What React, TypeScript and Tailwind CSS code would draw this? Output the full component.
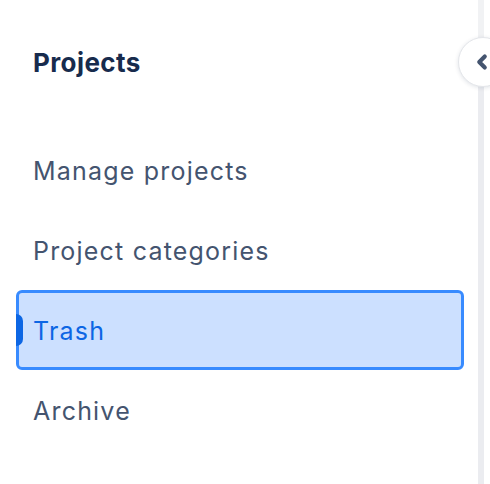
import { ChevronLeft } from 'lucide-react';

const items = [
    { label: 'Manage projects', selected: false },
    { label: 'Project categories', selected: false },
    { label: 'Trash', selected: true },
    { label: 'Archive', selected: false },
];

export default function App() {
    return (
        <div className="relative flex h-[484px] w-[490px] overflow-hidden bg-white font-['Inter',sans-serif]">
            <nav className="w-[478px] shrink-0 pl-4 pr-[14px]">
                <div className="flex h-[130px] items-start pl-[17px] pt-[45px]">
                    <h2 className="text-[26px] font-bold leading-[36px] tracking-[0.4px] text-[#172B4D]">Projects</h2>
                </div>

                <ul>
                    {items.map((item) => (
                        <li key={item.label}>
                            <a
                                href="#"
                                className={
                                    item.selected
                                        ? 'relative flex h-20 items-center rounded-[6px] border-[3px] border-[#388BFF] bg-[#CCE0FF] pl-[14px] pt-[3px] text-[25px] tracking-[1.2px] text-[#0C66E4]'
                                        : 'relative flex h-20 items-center rounded-[6px] border-[3px] border-transparent pl-[14px] pt-[3px] text-[25px] tracking-[1.2px] text-[#44546F]'
                                }
                            >
                                {/* the selected row gets a pill on its left edge */}
                                {item.selected && (
                                    <span className="absolute -left-[3px] top-[21px] h-8 w-[7px] rounded-r-full bg-[#0C66E4]" />
                                )}
                                {item.label}
                            </a>
                        </li>
                    ))}
                </ul>
            </nav>

            <div className="flex w-[6px] shrink-0 flex-col">
                <div className="h-[40px] bg-[#F1F2F4]" />
                <div className="flex-1 bg-[#EBECF0]" />
            </div>

            <div className="flex-1 bg-white" />

            <button
                type="button"
                className="absolute left-[458px] top-[37px] flex h-[50px] w-[50px] items-center justify-center rounded-full border border-[#E4E6EA] bg-white shadow-[0_1px_4px_rgba(9,30,66,0.12)]"
            >
                <ChevronLeft className="-ml-[2px] h-[22px] w-[22px] text-[#44546F]" strokeWidth={4.5} />
            </button>
        </div>
    );
}
